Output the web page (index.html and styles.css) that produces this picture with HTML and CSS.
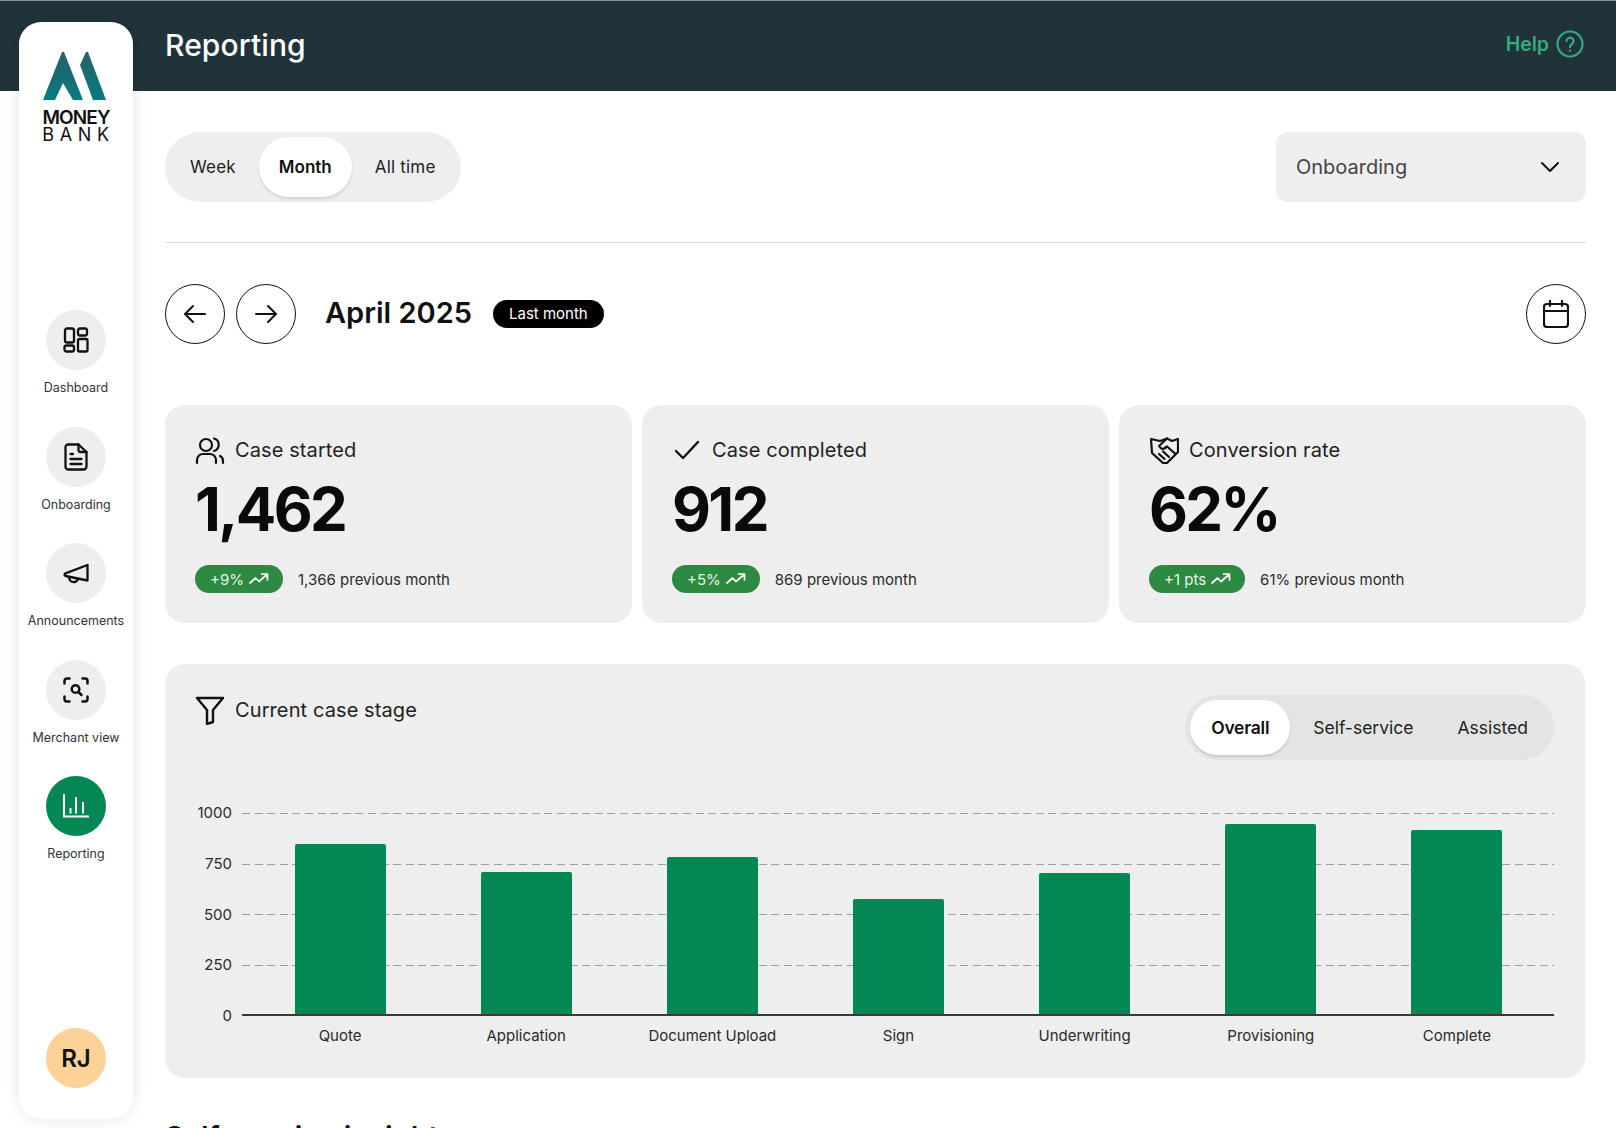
FILE: index.html
```html
<!DOCTYPE html>
<html lang="en">
<head>
<meta charset="utf-8">
<title>Reporting</title>
<link rel="stylesheet" href="styles.css">
</head>
<body>
<svg class="defs" width="0" height="0" aria-hidden="true">
  <symbol id="trend" viewBox="0 0 20 14"><path d="M1 11l5.500-5 3.500 3.500L18 2.500M12.500 2H18.500V8" fill="none" stroke="currentColor" stroke-width="1.700" stroke-linecap="round" stroke-linejoin="round"/></symbol>
</svg>
<div class="app">
  <header class="topbar">
    <h1 class="page-title">Reporting</h1>
    <a class="help">Help
      <svg class="help-icon" viewBox="0 0 28 28" fill="none" stroke="currentColor" stroke-width="2.200" stroke-linecap="round"><circle cx="14" cy="14" r="12.500"/><path d="M10.500 11a3.500 3.500 0 1 1 5.500 3c-1.300.9-2 1.500-2 3"/><path d="M14 20.500v.2"/></svg>
    </a>
  </header>

  <aside class="sidebar">
    <div class="logo">
      <svg class="logo-mark" viewBox="0 0 63 48">
        <defs><linearGradient id="lg" x1="0" y1="0" x2="0" y2="1"><stop offset="0" stop-color="#2a5f68"/><stop offset="1" stop-color="#067b81"/></linearGradient></defs>
        <path fill="url(#lg)" d="M0 48L19 0H21L40 48H30L20 31 12 48z"/>
        <path fill="url(#lg)" d="M43 0h2L63 48H50L37 13z"/>
      </svg>
      <div class="logo-text"><span class="logo-money">MONEY</span><br><span class="logo-bank">BANK</span></div>
    </div>
    <nav class="side-nav">
      <div class="side-item">
        <span class="side-circle"><svg class="side-icon" viewBox="0 0 26 26" fill="none" stroke="currentColor" stroke-width="2.300" stroke-linejoin="round"><rect x="2" y="1.500" width="9" height="14" rx="2"/><rect x="15" y="1.500" width="9" height="7" rx="2"/><rect x="1.500" y="18.500" width="9.500" height="6" rx="2"/><rect x="15" y="12" width="9.500" height="12.500" rx="1.500"/></svg></span>
        <span class="side-label">Dashboard</span>
      </div>
      <div class="side-item">
        <span class="side-circle"><svg class="side-icon side-icon-tall" viewBox="0 0 24 28" fill="none" stroke="currentColor" stroke-width="2.300" stroke-linejoin="round" stroke-linecap="round"><path d="M4 1.500h10.500L22.500 9v14.500a3 3 0 0 1-3 3H4a2.500 2.500 0 0 1-2.500-2.500V4A2.500 2.500 0 0 1 4 1.500z"/><path d="M14.500 1.500V7a2 2 0 0 0 2 2h6"/><path d="M6.500 11h2.500M6.500 16h11M6.500 21h11"/></svg></span>
        <span class="side-label">Onboarding</span>
      </div>
      <div class="side-item">
        <span class="side-circle"><svg class="side-icon" viewBox="0 0 26 26" fill="none" stroke="currentColor" stroke-width="2.300" stroke-linejoin="round" stroke-linecap="round"><path d="M24.500 5v15.500L2.500 16c-1.300-.3-1.300-2 0-2.600z"/><path d="M6 17c0 3.500 2.500 5.500 5.500 5 2-.3 3-1.500 3.500-3.500"/></svg></span>
        <span class="side-label">Announcements</span>
      </div>
      <div class="side-item">
        <span class="side-circle"><svg class="side-icon" viewBox="0 0 26 26" fill="none" stroke="currentColor" stroke-width="2.500" stroke-linecap="round" stroke-linejoin="round"><path d="M1.500 6.500V4A2.500 2.500 0 0 1 4 1.500h2.500M19.500 1.500H22A2.500 2.500 0 0 1 24.500 4v2.500M24.500 19.500V22a2.500 2.500 0 0 1-2.500 2.500h-2.500M6.500 24.500H4A2.500 2.500 0 0 1 1.500 22v-2.500"/><circle cx="12.500" cy="12" r="3.800"/><path d="M15.500 15l3 3"/></svg></span>
        <span class="side-label">Merchant view</span>
      </div>
      <div class="side-item">
        <span class="side-circle side-circle-active"><svg class="side-icon" viewBox="0 0 26 26" fill="none" stroke="currentColor" stroke-width="2"><path d="M1 1v22.500h25"/><path d="M7.500 15v5.500M13 4v16.500M20 9v11.500"/></svg></span>
        <span class="side-label">Reporting</span>
      </div>
    </nav>
    <div class="avatar">RJ</div>
  </aside>

  <main class="main">
    <section class="controls">
      <div class="segment">
        <span class="segment-item">Week</span>
        <span class="segment-item segment-active">Month</span>
        <span class="segment-item">All time</span>
      </div>
      <div class="select">
        <span>Onboarding</span>
        <svg class="chevron" viewBox="0 0 20 12" fill="none" stroke="currentColor" stroke-width="2" stroke-linecap="round" stroke-linejoin="round"><path d="M2 2l8 8 8-8"/></svg>
      </div>
    </section>
    <hr class="divider">

    <section class="period">
      <button class="round-btn"><svg class="btn-icon" viewBox="0 0 24 24" fill="none" stroke="currentColor" stroke-width="2" stroke-linecap="round" stroke-linejoin="round"><path d="M22 12H3M10 4l-8 8 8 8"/></svg></button>
      <button class="round-btn"><svg class="btn-icon" viewBox="0 0 24 24" fill="none" stroke="currentColor" stroke-width="2" stroke-linecap="round" stroke-linejoin="round"><path d="M2 12h19M14 4l8 8-8 8"/></svg></button>
      <h2 class="period-title">April 2025</h2>
      <span class="period-badge">Last month</span>
      <button class="round-btn round-btn-end"><svg class="btn-icon btn-icon-lg" viewBox="0 0 26 28" fill="none" stroke="currentColor" stroke-width="2.200" stroke-linecap="round" stroke-linejoin="round"><rect x="1" y="4" width="24" height="23" rx="3"/><path d="M1 11h24M7 1v5M19 1v5"/></svg></button>
    </section>

    <section class="cards">
      <article class="card">
        <div class="card-title">
          <svg class="card-icon" viewBox="0 0 30 30" fill="none" stroke="currentColor" stroke-width="2.200" stroke-linecap="round"><circle cx="11" cy="10" r="6"/><path d="M2 28v-3a6 6 0 0 1 6-6h7a6 6 0 0 1 6 6v3"/><path d="M19 3.500a6.500 6.500 0 0 1 0 12.500M25 21c2 1 3 3 3 5v2"/></svg>
          <span>Case started</span>
        </div>
        <div class="metric">1,462</div>
        <div class="card-foot">
          <span class="pill">+9% <svg class="pill-icon"><use href="#trend"/></svg></span>
          <span class="prev">1,366 previous month</span>
        </div>
      </article>
      <article class="card">
        <div class="card-title">
          <svg class="card-icon" viewBox="0 0 30 30" fill="none" stroke="currentColor" stroke-width="2.400" stroke-linecap="round" stroke-linejoin="round"><path d="M4 16l7 7L26 7"/></svg>
          <span>Case completed</span>
        </div>
        <div class="metric">912</div>
        <div class="card-foot">
          <span class="pill">+5% <svg class="pill-icon"><use href="#trend"/></svg></span>
          <span class="prev">869 previous month</span>
        </div>
      </article>
      <article class="card">
        <div class="card-title">
          <svg class="card-icon" viewBox="0 0 30 30" fill="none" stroke="currentColor" stroke-width="2.200" stroke-linecap="round" stroke-linejoin="round"><path d="M2 4l9 2 7-2.500 5 2.500 6-2v13L18 28h-4L3 18z"/><path d="M18 3.500L10 11c2 3 4 3.500 6 2l2-1.500 8 7"/><path d="M10 19l5.500 5M14 16.500l6 5.500"/></svg>
          <span>Conversion rate</span>
        </div>
        <div class="metric">62%</div>
        <div class="card-foot">
          <span class="pill">+1 pts <svg class="pill-icon"><use href="#trend"/></svg></span>
          <span class="prev">61% previous month</span>
        </div>
      </article>
    </section>

    <section class="chart-card">
      <div class="chart-head">
        <div class="card-title">
          <svg class="card-icon" viewBox="0 0 30 30" fill="none" stroke="currentColor" stroke-width="2.400" stroke-linejoin="round"><path d="M2 3h26L18 15v12l-6 2V15z"/></svg>
          <span>Current case stage</span>
        </div>
        <div class="toggle">
          <span class="toggle-item toggle-active">Overall</span>
          <span class="toggle-item">Self-service</span>
          <span class="toggle-item">Assisted</span>
        </div>
      </div>
      <div class="chart">
        <div class="y-axis">
          <span>1000</span><span>750</span><span>500</span><span>250</span><span>0</span>
        </div>
        <div class="plot">
          <div class="gridlines"><i></i><i></i><i></i><i></i></div>
          <div class="bars">
            <div class="bar-slot"><div class="bar" style="height:170px"></div></div>
            <div class="bar-slot"><div class="bar" style="height:142px"></div></div>
            <div class="bar-slot"><div class="bar" style="height:157px"></div></div>
            <div class="bar-slot"><div class="bar" style="height:115px"></div></div>
            <div class="bar-slot"><div class="bar" style="height:141px"></div></div>
            <div class="bar-slot"><div class="bar" style="height:190px"></div></div>
            <div class="bar-slot"><div class="bar" style="height:184px"></div></div>
          </div>
        </div>
        <div class="x-axis">
          <span>Quote</span><span>Application</span><span>Document Upload</span><span>Sign</span><span>Underwriting</span><span>Provisioning</span><span>Complete</span>
        </div>
      </div>
    </section>

    <h2 class="section-heading">Self-service insights</h2>
  </main>
</div>
</body>
</html>
```
FILE: styles.css
```css
* { box-sizing: border-box; }
html, body { margin: 0; padding: 0; height: 100%; overflow: hidden; background: #fff; }
body { font-family: "Inter", "Liberation Sans", sans-serif; color: #111; }
.defs { display: block; height: 0; }
.app { position: relative; height: 1128px; overflow: hidden; }

.topbar {
  display: flex; align-items: center; justify-content: space-between;
  height: 91px; padding: 0 32px 2px 165px; background: #20323a;
  border-top: 1px solid #8a9499;
}
.page-title { margin: 0; font-size: 30px; font-weight: 500; color: #fff; letter-spacing: .1px; }
.help { display: flex; align-items: center; gap: 7px; margin-bottom: 3px; color: #35ab7c; font-size: 19.500px; font-weight: 600; }
.help-icon { width: 28px; height: 28px; }

.sidebar {
  position: absolute; left: 19px; top: 22px; width: 114px; height: 1097px;
  display: flex; flex-direction: column; align-items: center;
  padding: 30px 0 31px; background: #fff; border-radius: 22px;
  box-shadow: 0 0 16px rgba(0,0,0,.1);
}
.logo { display: flex; flex-direction: column; align-items: center; color: #111; }
.logo-mark { width: 63px; height: 48px; margin-right: 3px; }
.logo-text { height: 36px; margin-top: 10px; text-align: center; color: #111; line-height: 16.500px; }
.logo-money { font-size: 19px; font-weight: 600; letter-spacing: -.9px; }
.logo-bank { font-size: 18px; font-weight: 400; letter-spacing: 5.600px; margin-right: -5px; }

.side-nav { display: flex; flex-direction: column; gap: 30.500px; margin-top: 164px; }
.side-item { display: flex; flex-direction: column; align-items: center; gap: 10px; }
.side-circle { display: flex; align-items: center; justify-content: center; width: 60px; height: 60px; border-radius: 50%; background: #eee; color: #111; }
.side-circle-active { background: #038854; color: #fff; }
.side-icon { width: 26px; height: 26px; }
.side-icon-tall { width: 24px; height: 28px; }
.side-label { font-size: 12.500px; line-height: 16px; color: #333; white-space: nowrap; }
.avatar {
  display: flex; align-items: center; justify-content: center;
  width: 60px; height: 60px; margin-top: auto; border-radius: 50%;
  background: #fdd298; font-size: 24px; font-weight: 600;
}

.main { padding: 41px 30px 0 165px; }
.controls { display: flex; justify-content: space-between; }
.segment { display: flex; align-items: center; gap: 3px; height: 70px; padding: 5px; border-radius: 35px; background: #eee; }
.segment-item { display: flex; align-items: center; height: 60px; padding: 0 20px; border-radius: 30px; font-size: 17px; letter-spacing: .2px; color: #222; }
.segment-active { background: #fff; font-weight: 600; color: #111; letter-spacing: 0; box-shadow: 0 2px 3px rgba(0,0,0,.12); }
.select {
  display: flex; align-items: center; justify-content: space-between;
  width: 310px; height: 70px; padding: 0 26px 0 20px;
  border-radius: 12px; background: #eee; font-size: 20px; color: #444;
}
.chevron { width: 20px; height: 12px; color: #111; }
.divider { height: 1px; margin: 40px 0 41px; border: 0; background: #ddd; }

.period { display: flex; align-items: center; gap: 11px; }
.round-btn {
  display: flex; align-items: center; justify-content: center;
  width: 60px; height: 60px; padding: 0; border: 1.500px solid #111;
  border-radius: 50%; background: #fff; color: #111;
}
.round-btn-end { margin-left: auto; }
.btn-icon { width: 24px; height: 24px; }
.btn-icon-lg { width: 26px; height: 28px; }
.period-title { margin: 0 10px 3px 18px; font-size: 29px; font-weight: 600; }
.period-badge { padding: 0 16px; height: 28px; line-height: 28px; border-radius: 14px; background: #000; color: #fff; font-size: 15px; }

.cards { display: grid; grid-template-columns: repeat(3, 1fr); gap: 10px; margin-top: 61px; }
.card { height: 218px; padding: 30px 30px 0; border-radius: 20px; background: #eee; }
.card-title { display: flex; align-items: center; gap: 10px; height: 30px; font-size: 20px; letter-spacing: .1px; color: #222; }
.card-icon { width: 30px; height: 30px; color: #111; flex: none; }
.metric { margin-top: 14px; height: 60px; font-size: 60px; line-height: 60px; font-weight: 700; color: #0a0a0a; letter-spacing: -2.600px; }
.card-foot { display: flex; align-items: center; gap: 15px; margin-top: 26px; }
.pill {
  display: flex; align-items: center; gap: 5px; height: 28px; padding: 0 14px 0 15px;
  border-radius: 14px; background: #2c8a41; color: #e9f4ec; font-size: 15px;
}
.pill-icon { width: 20px; height: 14px; color: #fff; }
.prev { font-size: 15px; color: #2b2b2b; }

.chart-card { height: 414px; margin: 41px 1px 0 0; padding: 31px 31px 0 30px; border-radius: 20px; background: #eee; }
.chart-head { display: flex; justify-content: space-between; align-items: flex-start; }
.toggle { display: flex; align-items: center; height: 65px; padding: 5px; gap: 2px; border-radius: 33px; background: #e3e5e4; }
.toggle-item { display: flex; align-items: center; height: 55px; padding: 0 21px; border-radius: 28px; font-size: 17.500px; color: #222; }
.toggle-active { background: #fff; font-weight: 600; color: #111; letter-spacing: -.25px; box-shadow: 0 2px 2px rgba(0,0,0,.12); }

.chart { display: grid; grid-template-columns: 47px 1fr; margin-top: 53px; }
.y-axis { display: flex; flex-direction: column; justify-content: space-between; height: 203px; padding-right: 10px; font-size: 15px; color: #2b2b2b; text-align: right; }
.y-axis span { height: 20px; line-height: 20px; margin: -10px 0; }
.plot { position: relative; height: 203px; border-bottom: 2px solid #3a3a3a; }
.gridlines { position: absolute; inset: 0 0 1px; display: flex; flex-direction: column; justify-content: flex-start; gap: 49.500px; }
.gridlines i { display: block; height: 1px; background: repeating-linear-gradient(90deg, #98a3a0 0 8px, transparent 8px 12.600px); }
.bars { position: relative; display: flex; align-items: flex-end; height: 100%; padding: 0 4px 0 5px; }
.bar-slot { display: flex; flex: 1; justify-content: center; }
.bar { width: 91px; border-radius: 2px 2px 0 0; background: #038854; }
.x-axis { grid-column: 2; display: flex; padding: 0 4px 0 5px; margin-top: 10px; font-size: 15px; line-height: 20px; color: #2b2b2b; }
.x-axis span { flex: 1; text-align: center; }

.section-heading { margin: 41px 0 0; font-size: 29px; line-height: 36px; font-weight: 600; }
```
